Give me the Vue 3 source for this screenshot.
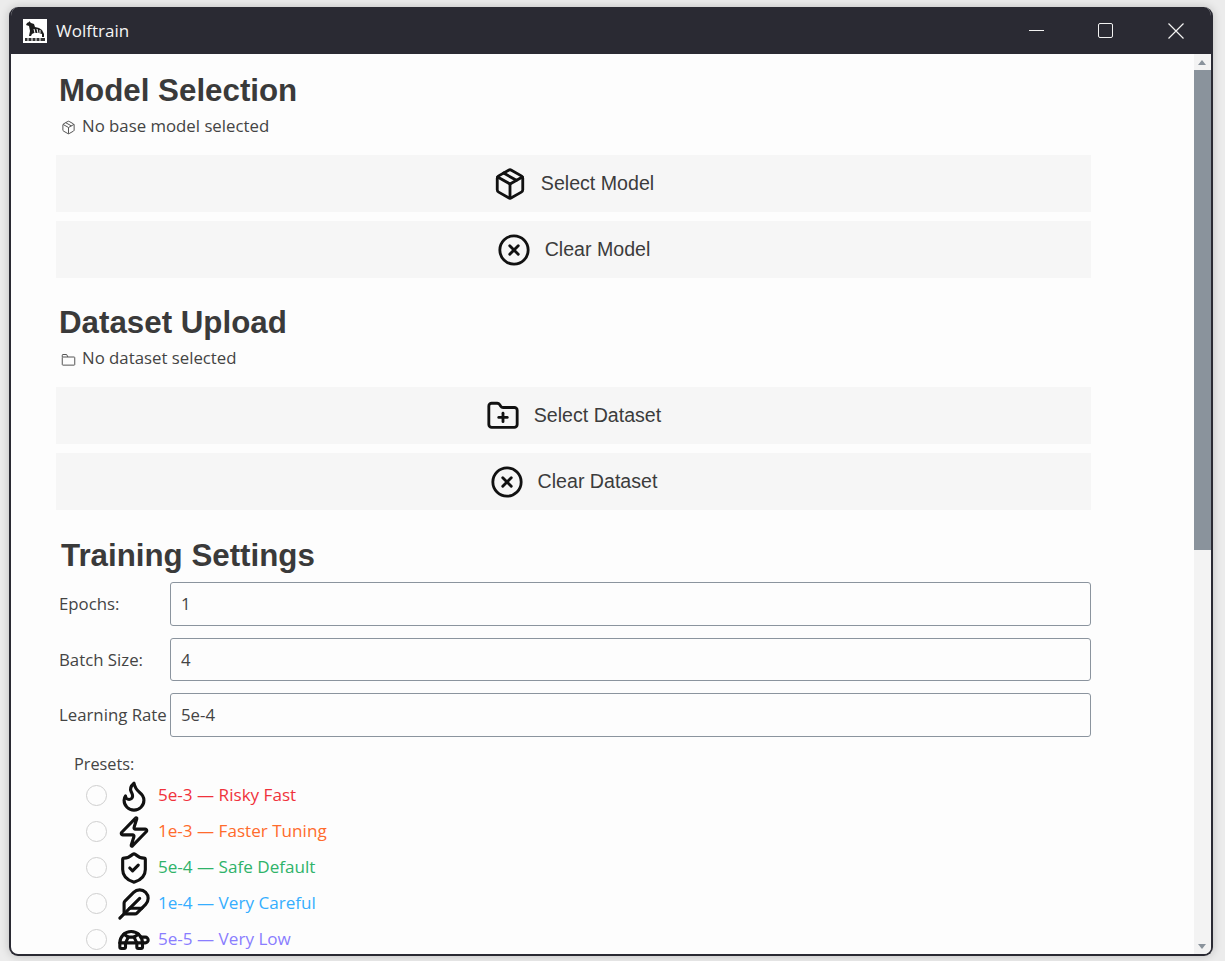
<template>
  <div class="desktop">
    <div class="window">
      <header class="titlebar">
        <svg class="logo" viewBox="0 0 24 24">
          <rect width="24" height="24" fill="#fff" />
          <path d="M6 2l2 2 3 1 1 3 4 1 3 2 2 4 0 3-2 0 0-3-3-1-5 0-2 1-1 2-2 0 1-5-1-5-3-1 1-2 2-1z" fill="#1c1c1c" />
          <path d="M11 10l1 4M14 10l1 4M17 11l0 3" stroke="#fff" stroke-width="1" />
          <rect x="2" y="19" width="20" height="3" fill="#333" />
          <path d="M5 19v3M9 19v3M13 19v3M17 19v3" stroke="#fff" stroke-width="1" />
        </svg>
        <span class="app-name">Wolftrain</span>
        <div class="window-controls">
          <span class="control"><i class="min-line"></i></span>
          <span class="control"><i class="max-box"></i></span>
          <span class="control">
            <svg width="16" height="16" viewBox="0 0 16 16"><path d="M.5.5l15 15M15.5.5l-15 15" stroke="#f2f2f2" stroke-width="1.2" /></svg>
          </span>
        </div>
      </header>

      <div class="body">
        <main class="content">
          <h2 class="heading">Model Selection</h2>
          <div class="status">
            <svg class="status-icon" viewBox="0 0 24 24" v-html="icons.package"></svg>
            <span>No base model selected</span>
          </div>
          <button class="action">
            <svg class="icon" viewBox="0 0 24 24" v-html="icons.package"></svg>
            <span>Select Model</span>
          </button>
          <button class="action">
            <svg class="icon" viewBox="0 0 24 24" v-html="icons.clear"></svg>
            <span>Clear Model</span>
          </button>

          <h2 class="heading second">Dataset Upload</h2>
          <div class="status">
            <svg class="status-icon" viewBox="0 0 24 24" v-html="icons.folder"></svg>
            <span>No dataset selected</span>
          </div>
          <button class="action">
            <svg class="icon" viewBox="0 0 24 24" v-html="icons.folderPlus"></svg>
            <span>Select Dataset</span>
          </button>
          <button class="action">
            <svg class="icon" viewBox="0 0 24 24" v-html="icons.clear"></svg>
            <span>Clear Dataset</span>
          </button>

          <h2 class="heading training">Training Settings</h2>
          <div class="fields">
            <label v-for="field in fields" :key="field.label" class="field">
              <span class="field-label">{{ field.label }}</span>
              <input class="field-input" type="text" :value="field.value" />
            </label>
          </div>

          <div class="presets-label">Presets:</div>
          <ul class="presets">
            <li v-for="preset in presets" :key="preset.label" class="preset">
              <input class="radio" type="radio" name="preset" />
              <svg class="icon preset-icon" viewBox="0 0 24 24" v-html="icons[preset.icon]"></svg>
              <span class="preset-text" :style="{ color: preset.color }">{{ preset.label }}</span>
            </li>
          </ul>
        </main>

        <aside class="scrollbar">
          <span class="arrow up"></span>
          <span class="thumb"></span>
          <span class="arrow down"></span>
        </aside>
      </div>
    </div>
  </div>
</template>

<script setup>
const icons = {
  package:
    '<path d="M11 21.73a2 2 0 0 0 2 0l7-4A2 2 0 0 0 21 16V8a2 2 0 0 0-1-1.73l-7-4a2 2 0 0 0-2 0l-7 4A2 2 0 0 0 3 8v8a2 2 0 0 0 1 1.73z"/><path d="M12 22V12"/><path d="M3.29 7 12 12 20.71 7"/><path d="m7.5 4.27 9 5.15"/>',
  clear: '<circle cx="12" cy="12" r="10"/><path d="m15 9-6 6"/><path d="m9 9 6 6"/>',
  folder:
    '<rect x="2" y="8" width="20" height="13" rx="1"/><path d="M2 8V5a1 1 0 0 1 1-1h6l2 4"/>',
  folderPlus:
    '<path d="M12 10v6"/><path d="M9 13h6"/><path d="M20 20a2 2 0 0 0 2-2V8a2 2 0 0 0-2-2h-7.9a2 2 0 0 1-1.69-.9L9.6 3.9A2 2 0 0 0 7.93 3H4a2 2 0 0 0-2 2v13a2 2 0 0 0 2 2Z"/>',
  flame:
    '<path d="M8.5 14.5A2.5 2.5 0 0 0 11 12c0-1.38-.5-2-1-3-1.072-2.143-.224-4.054 2-6 .5 2.5 2 4.9 4 6.5 2 1.6 3 3.5 3 5.5a7 7 0 1 1-14 0c0-1.153.433-2.294 1-3a2.5 2.5 0 0 0 2.5 2.5z"/>',
  zap:
    '<path d="M4 14a1 1 0 0 1-.78-1.63l9.9-10.2a.5.5 0 0 1 .86.46l-1.92 6.02A1 1 0 0 0 13 10h7a1 1 0 0 1 .78 1.63l-9.9 10.2a.5.5 0 0 1-.86-.46l1.92-6.02A1 1 0 0 0 11 14z"/>',
  shield:
    '<path d="M20 13c0 5-3.5 7.5-7.66 8.95a1 1 0 0 1-.67-.01C7.5 20.5 4 18 4 13V6a1 1 0 0 1 1-1c2 0 4.5-1.2 6.24-2.72a1.17 1.17 0 0 1 1.52 0C14.51 3.81 17 5 19 5a1 1 0 0 1 1 1z"/><path d="m9 12 2 2 4-4"/>',
  feather:
    '<path d="M12.67 19a2 2 0 0 0 1.416-.588l6.154-6.172a6 6 0 0 0-8.49-8.49L5.586 9.914A2 2 0 0 0 5 11.328V18a1 1 0 0 0 1 1z"/><path d="M16 8 2 22"/><path d="M17.5 15H9"/>',
  turtle:
    '<path d="m12 10 2 4v3a1 1 0 0 0 1 1h2a1 1 0 0 0 1-1v-3a8 8 0 1 0-16 0v3a1 1 0 0 0 1 1h2a1 1 0 0 0 1-1v-3l2-4h4Z"/><path d="M4.82 7.9 8 10"/><path d="M15.18 7.9 12 10"/><path d="M16.93 10H20a2 2 0 0 1 0 4H2"/>',
};

const fields = [
  { label: "Epochs:", value: "1" },
  { label: "Batch Size:", value: "4" },
  { label: "Learning Rate", value: "5e-4" },
];

const presets = [
  { label: "5e-3 — Risky Fast", icon: "flame", color: "#f0323c" },
  { label: "1e-3 — Faster Tuning", icon: "zap", color: "#ff6b2c" },
  { label: "5e-4 — Safe Default", icon: "shield", color: "#2fb36a" },
  { label: "1e-4 — Very Careful", icon: "feather", color: "#35aeff" },
  { label: "5e-5 — Very Low", icon: "turtle", color: "#8a7dff" },
];
</script>

<style>
html,
body {
  margin: 0;
  overflow: hidden;
}
</style>

<style scoped>
.desktop {
  width: 1225px;
  height: 961px;
  box-sizing: border-box;
  padding: 7px 12px 5px 9px;
  background: #ececec;
}

.window {
  height: 100%;
  display: flex;
  flex-direction: column;
  box-sizing: border-box;
  border: 2px solid #2a2a33;
  border-top: 0;
  border-radius: 9px;
  overflow: hidden;
  background: #fdfdfd;
  box-shadow: 0 0 10px rgba(0, 0, 0, 0.2);
}

.titlebar {
  flex: none;
  height: 47px;
  display: flex;
  align-items: center;
  padding-left: 12px;
  background: #2a2a33;
  color: #f5f5f5;
  font-family: "Open Sans", sans-serif;
  font-size: 17px;
}

.logo {
  width: 24px;
  height: 24px;
  margin-right: 9px;
}

.window-controls {
  display: flex;
  margin-left: auto;
}

.control {
  width: 70px;
  height: 47px;
  display: flex;
  align-items: center;
  justify-content: center;
}

.min-line {
  width: 15px;
  height: 1px;
  background: #f2f2f2;
}

.max-box {
  width: 13px;
  height: 13px;
  margin-right: 2px;
  border: 1px solid #f2f2f2;
  border-radius: 2px;
}

.body {
  flex: 1;
  min-height: 0;
  display: flex;
}

.content {
  flex: 1;
  min-width: 0;
  overflow: hidden;
  padding: 0 103px 0 45px;
  color: #3c3c3c;
}

.heading {
  margin: 19px 0 0;
  padding-left: 3px;
  height: 36px;
  line-height: 36px;
  font-family: "Liberation Sans", sans-serif;
  font-size: 31.3px;
  font-weight: 700;
  color: #3a3a3a;
}

.heading.second {
  margin-top: 27px;
}

.heading.training {
  margin-top: 28px;
  padding-left: 5px;
}

.status {
  display: flex;
  align-items: center;
  height: 22px;
  margin: 5px 0 19px;
  padding-left: 5px;
  font-family: "Open Sans", sans-serif;
  font-size: 16.8px;
  color: #444;
}

.status-icon {
  width: 15px;
  height: 15px;
  margin: 4px 6px 0 0;
  fill: none;
  stroke: #555;
  stroke-width: 1.6;
}

.action {
  width: 100%;
  height: 57px;
  display: flex;
  align-items: center;
  justify-content: center;
  gap: 14px;
  margin: 0 0 9px;
  border: 0;
  background: #f6f6f6;
  color: #3c3c3c;
  font-family: "Liberation Sans", sans-serif;
  font-size: 19.6px;
}

.icon {
  width: 34px;
  height: 34px;
  fill: none;
  stroke: #111;
  stroke-width: 2;
  stroke-linecap: round;
  stroke-linejoin: round;
}

.fields {
  display: flex;
  flex-direction: column;
  gap: 12px;
  margin-top: 8px;
}

.field {
  display: flex;
  align-items: center;
  height: 43.5px;
  font-family: "Open Sans", sans-serif;
  font-size: 16.8px;
}

.field-label {
  width: 114px;
  flex: none;
  padding-left: 3px;
  box-sizing: border-box;
  color: #444;
  white-space: nowrap;
}

.field-input {
  flex: 1;
  min-width: 0;
  height: 43.5px;
  box-sizing: border-box;
  padding: 0 10px;
  border: 1px solid #8b949e;
  border-radius: 3px;
  outline: 0;
  background: #fdfdfd;
  color: #444;
  font: inherit;
}

.presets-label {
  margin: 16px 0 0 18px;
  height: 22px;
  line-height: 22px;
  font-family: "Open Sans", sans-serif;
  font-size: 16.3px;
  color: #444;
}

.presets {
  list-style: none;
  margin: 3px 0 0;
  padding: 0 0 0 30px;
  font-family: "Open Sans", sans-serif;
  font-size: 17.1px;
}

.preset {
  display: flex;
  align-items: center;
  height: 36px;
}

.preset-text {
  margin-bottom: 2px;
}

.radio {
  appearance: none;
  width: 21px;
  height: 21px;
  margin: 0 10px 0 0;
  box-sizing: border-box;
  border: 1.5px solid #cfcfcf;
  border-radius: 50%;
  background: #fdfdfd;
}

.preset-icon {
  width: 34px;
  height: 34px;
  margin-right: 7px;
  stroke-width: 2.2;
}

.scrollbar {
  position: relative;
  flex: none;
  width: 17px;
  background: #f3f3f3;
}

.thumb {
  position: absolute;
  top: 16px;
  left: 0;
  width: 100%;
  height: 480px;
  background: #8a939c;
}

.arrow {
  position: absolute;
  left: 4px;
  width: 0;
  height: 0;
  border-left: 4px solid transparent;
  border-right: 4px solid transparent;
}

.arrow.up {
  top: 6px;
  border-bottom: 5px solid #8a939c;
}

.arrow.down {
  bottom: 5px;
  border-top: 5px solid #8a939c;
}
</style>
